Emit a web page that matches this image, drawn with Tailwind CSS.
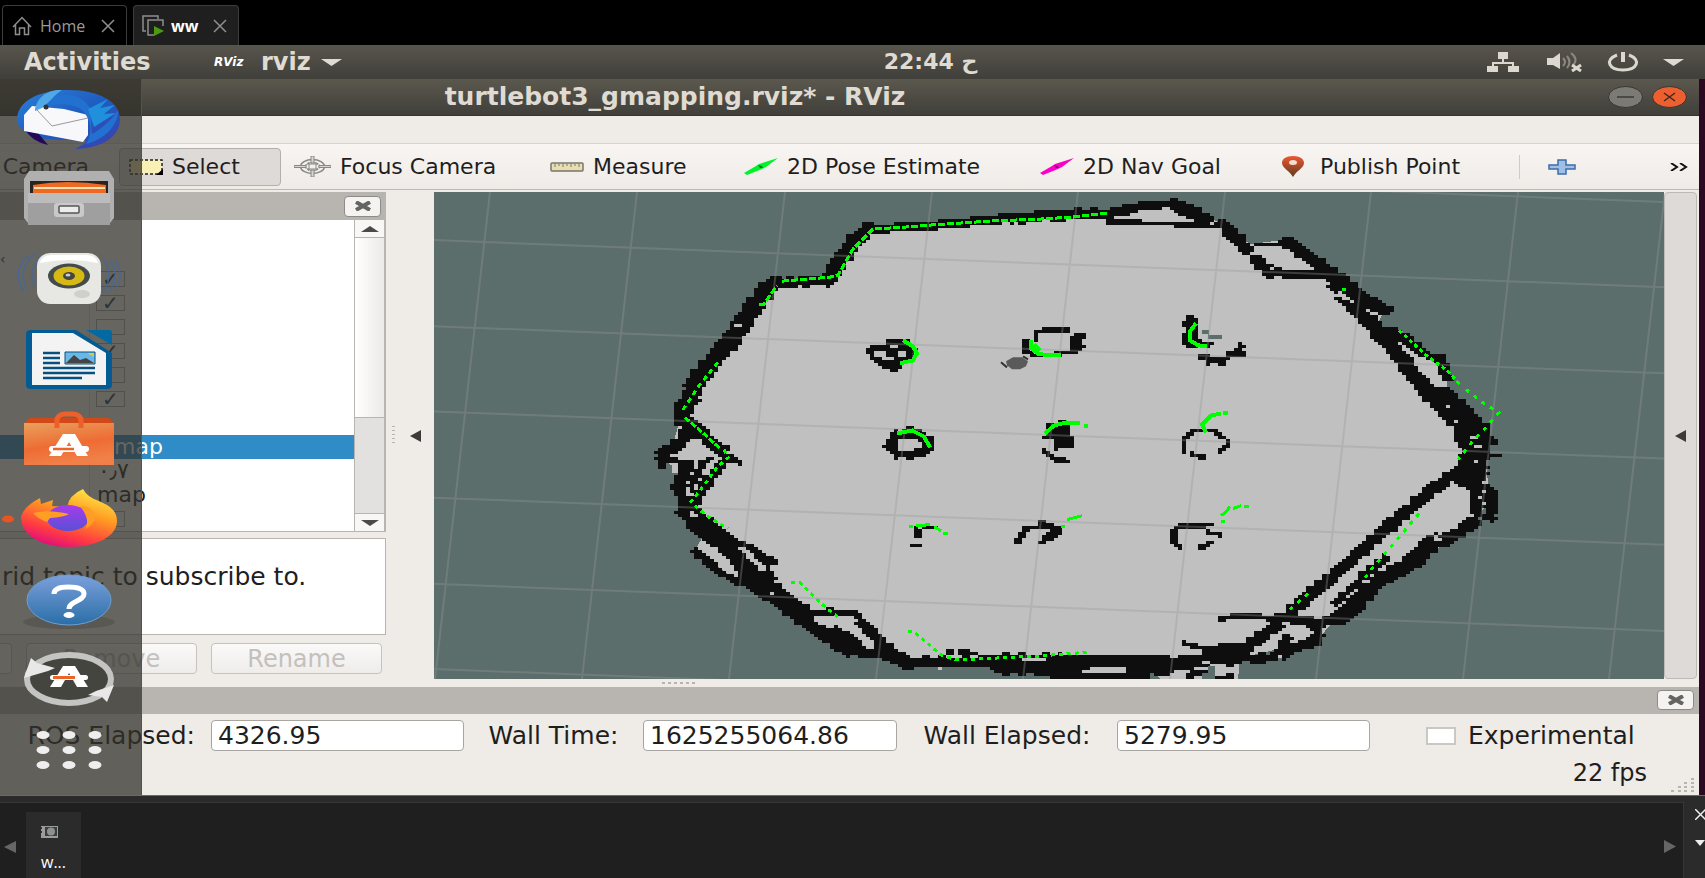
<!DOCTYPE html>
<html lang="en">
<head>
<meta charset="utf-8">
<title>ww</title>
<script src="https://cdn.jsdelivr.net/npm/@tailwindcss/browser@4"></script>
</head>
<body class="flex min-h-screen flex-col overflow-x-hidden bg-black font-['DejaVu_Sans',sans-serif] text-[#1e1e1e]">

<!-- Virtual machine tabs -->
<nav class="flex h-[45px] shrink-0 items-end gap-[6px] bg-black pl-[2px] font-['Open_Sans',sans-serif] text-base">
  <div class="flex h-10 w-[125px] items-center rounded-t border border-b-0 border-[#3c3c3c] pl-[9px] text-[#9a9a9a]">
    <svg class="h-5 w-5" viewBox="0 0 20 20" fill="none" stroke="#8f8f8f" stroke-width="1.5"><path d="M1 11 10 1.500 19 11M3.500 9v9.500h4V12h5v6.500h4V9"/></svg>
    <button class="ml-2 w-[61px] text-left">Home</button>
    <button aria-label="Close Home"><svg class="h-[14px] w-[14px]" viewBox="0 0 14 14" stroke="#8f8f8f" stroke-width="1.500"><path d="M1 1 13 13M13 1 1 13"/></svg></button>
  </div>
  <div class="flex h-10 w-[106px] items-center rounded-t border border-b-0 border-[#3c3c3c] bg-[#1f1f1f] pl-2 text-white">
    <svg class="h-[22px] w-[23px]" viewBox="0 0 23 22" fill="none"><path d="M4 16H1V1h15v3" stroke="#8f8f8f" stroke-width="1.500"/><path d="M12 20H6V5h15v6" stroke="#8f8f8f" stroke-width="1.500"/><path d="M12 11v10l10-5z" fill="#4a9a12"/></svg>
    <button class="ml-[6px] w-[42px] text-left font-bold">ww</button>
    <button aria-label="Close ww"><svg class="h-[14px] w-[14px]" viewBox="0 0 14 14" stroke="#8f8f8f" stroke-width="1.500"><path d="M1 1 13 13M13 1 1 13"/></svg></button>
  </div>
</nav>

<div class="relative flex grow flex-col bg-[#2a0a20]">
  <!-- Desktop panel -->
  <header class="grid h-[34px] shrink-0 grid-cols-3 items-center bg-linear-to-b from-[#58554c] to-[#403f3a] text-[#dfdbd2]">
    <div class="flex items-center pl-6 text-[24px] leading-8 font-bold">
      <button class="w-[190px] text-left">Activities</button>
      <span class="w-[47px] text-xs text-white italic">RViz</span>
      <button class="flex items-center gap-[10px]">rviz
        <svg class="h-[7px] w-[21px]" viewBox="0 0 21 7"><path d="M0 0h21L10.500 7z" fill="#dfdbd2"/></svg></button>
    </div>
    <button class="pl-[156px] text-center text-[22px] leading-8 font-bold">22:44 <span lang="ar">ح</span></button>
    <div class="flex items-center justify-end gap-6 pr-[21px]">
      <svg class="mr-1 h-5 w-8" viewBox="0 0 32 20" fill="#dcd8d0"><path d="M11 0h10v7h-4v3h10v4h5v6H21v-6h4v-2H7v2h4v6H0v-6h5v-4h10V7h-4z"/></svg>
      <svg class="h-5 w-9" viewBox="0 0 36 20"><path d="M0 6h6l7-5v16l-7-4H0z" fill="#dcd8d0"/><path d="M16 6q4 4 0 8M20 4q5 6 0 12M24 1q8 6 2 12" fill="none" stroke="#8c8982" stroke-width="2"/><path d="m25 13 9 6m0-6-9 6" stroke="#dcd8d0" stroke-width="3"/></svg>
      <svg class="h-5 w-8" viewBox="0 0 32 20" fill="none" stroke="#dcd8d0" stroke-width="3"><path d="M10 3C-3 8 2 18 16 18S35 8 22 3"/><path d="M16 0v10" stroke-width="4"/></svg>
      <svg class="h-[7px] w-[21px]" viewBox="0 0 21 7"><path d="M0 0h21L10.500 7z" fill="#dfdbd2"/></svg>
    </div>
  </header>

  <div class="mr-[6px] flex grow flex-col bg-[#efebe7]">
    <!-- Title bar -->
    <div class="flex h-[37px] shrink-0 items-center border-b border-[#34332f] bg-linear-to-b from-[#5b584e] to-[#403f3a]">
      <h1 class="w-[1350px] text-center text-[25px] leading-8 font-bold text-[#dfdbd2]">turtlebot3_gmapping.rviz* - RViz</h1>
      <div class="ml-auto flex gap-[9px] pr-3">
        <button aria-label="Minimize"><svg class="h-[22px] w-[35px]" viewBox="0 0 35 22"><ellipse cx="17.500" cy="11" rx="17" ry="10.500" fill="#7c7a74" stroke="#38372f"/><path d="M9 11h17" stroke="#3b3a35" stroke-width="1.500"/></svg></button>
        <button aria-label="Close"><svg class="h-[22px] w-[35px]" viewBox="0 0 35 22"><ellipse cx="17.500" cy="11" rx="17" ry="10.500" fill="#ee5f30" stroke="#38372f"/><path d="m12 7 11 8m0-8-11 8" stroke="#3b2a20" stroke-width="1.500"/></svg></button>
      </div>
    </div>
    <div class="h-7 shrink-0 border-b border-[#d6d2ce]"></div>

    <!-- Tool bar -->
    <div class="flex h-[46px] shrink-0 items-center border-b border-[#bdb9b5] bg-linear-to-b from-[#f8f5f2] to-[#efebe7] text-[22px] leading-7 whitespace-nowrap">
      <button class="w-[119px] pr-[30px] text-right">Camera</button>
      <button class="flex h-[38px] w-[162px] items-center gap-[9px] rounded border border-[#b3afab] bg-[#dedad7] pl-[9px]">
        <svg class="h-4 w-[34px]" viewBox="0 0 34 16"><path d="M1 1h32v14H1z" fill="#f9f0b5" stroke="#222" stroke-width="1.500" stroke-dasharray="3 2"/><path d="M34 10v6h-7z"/></svg>Select</button>
      <button class="flex w-[256px] items-center gap-[9px] pl-[13px]">
        <svg class="h-[21px] w-[37px]" viewBox="0 0 37 21" fill="none" stroke="#8a8884" stroke-width="1.500"><ellipse cx="18.500" cy="10.500" rx="12" ry="7"/><ellipse cx="18.500" cy="10.500" rx="7" ry="4" stroke-dasharray="2 1"/><path d="M0 9.500h12v2H0zM25 9.500h12v2H25zM17 0h3v7h-3zM17 14h3v7h-3z" stroke-width="1" fill="#d8d6d2"/><path d="M13 8h11M13 13h11M15 6v9M22 6v9" stroke-width="1"/></svg>Focus Camera</button>
      <button class="flex w-[194px] items-center gap-[9px] pl-[13px]">
        <svg class="h-[10px] w-[34px]" viewBox="0 0 34 10"><rect x="1" y="1" width="32" height="8" rx="1" fill="#e9deb0" stroke="#77756f" stroke-width="1.500"/><path d="M5 2v3M9 2v2M13 2v3M17 2v2M21 2v3M25 2v2M29 2v3" stroke="#77756f"/></svg>Measure</button>
      <button class="flex w-[296px] items-center gap-[9px] pl-[13px]">
        <svg class="h-[18px] w-[34px]" viewBox="0 0 34 18"><path d="M0 15 12 8l3-2L34 0 22 9l-4 2-15 6z" fill="#00f22c"/><path d="m14 7 4 1 1 2-3 0z" fill="#087a20"/></svg>2D Pose Estimate</button>
      <button class="flex w-[241px] items-center gap-[9px] pl-[13px]">
        <svg class="h-[18px] w-[34px]" viewBox="0 0 34 18"><path d="M0 15 12 8l3-2L34 0 22 9l-4 2-15 6z" fill="#fa00c8"/><path d="m14 7 4 1 1 2-3 0z" fill="#8a0870"/></svg>2D Nav Goal</button>
      <button class="flex w-[251px] items-center gap-4 pl-[14px]">
        <svg class="h-[21px] w-[22px]" viewBox="0 0 22 21"><defs><linearGradient id="pin" x2="0" y2="1"><stop stop-color="#ee5630"/><stop offset="1" stop-color="#5c3c22"/></linearGradient></defs><path d="M11 0c7 0 11 3 11 7 0 5-8 8-11 14C8 15 0 12 0 7 0 3 4 0 11 0z" fill="url(#pin)"/><ellipse cx="11" cy="6.500" rx="4" ry="2.500" fill="#f5ded4"/></svg>Publish Point</button>
      <span class="h-6 w-px bg-[#cfcbc7]"></span>
      <button class="ml-7" aria-label="Add tool"><svg class="h-4 w-[28px]" viewBox="0 0 28 16"><path d="M10 1h8v5h9v4h-9v5h-8v-5H1V6h9z" fill="#9fc0e4" stroke="#3d6cab" stroke-width="1.500"/></svg></button>
      <button class="ml-auto pr-[11px]" aria-label="More tools"><svg class="h-2 w-[18px]" viewBox="0 0 18 8" fill="none" stroke="#111" stroke-width="2"><path d="m1 0 6 4-6 4M10 0l6 4-6 4"/></svg></button>
    </div>

    <div class="flex grow pt-[2px]">
      <!-- Displays panel -->
      <section class="flex w-[386px] shrink-0 flex-col">
        <div class="flex h-7 shrink-0 items-center justify-end bg-[#b8b4b0] pr-[5px]">
          <button aria-label="Close displays" class="flex h-[21px] w-[37px] items-center justify-center rounded border border-[#8e8a86] bg-[#f5f3f1]"><svg class="h-[10px] w-4" viewBox="0 0 16 10" stroke="#666460" stroke-width="4"><path d="m1 1 14 8M15 1 1 9"/></svg></button>
        </div>
        <div class="flex h-[312px] shrink-0 border-r border-b border-[#b8b4b0] bg-white text-[22px] leading-6">
          <div class="grow pt-[23px]">
            <div class="h-6 text-sm leading-8 text-[#1c3a4c]">‹</div>
            <div class="ml-[89px] border-l border-[#e0dedc] pl-[6px]">
              <div class="flex h-6 items-center"><input type="checkbox" checked aria-label="Display 1" class="flex h-4 w-[29px] appearance-none items-center justify-center border border-[#b0aca8] checked:after:text-xl checked:after:text-[#103a5c] checked:after:content-['✓']"></div>
              <div class="flex h-6 items-center"><input type="checkbox" checked aria-label="Display 2" class="flex h-4 w-[29px] appearance-none items-center justify-center border border-[#b0aca8] checked:after:text-xl checked:after:text-[#103a5c] checked:after:content-['✓']"></div>
              <div class="flex h-6 items-center"><input type="checkbox" aria-label="Display 3" class="h-4 w-[29px] appearance-none border border-[#b0aca8]"></div>
              <div class="flex h-6 items-center"><input type="checkbox" checked aria-label="Display 4" class="flex h-4 w-[29px] appearance-none items-center justify-center border border-[#b0aca8] checked:after:text-xl checked:after:text-[#103a5c] checked:after:content-['✓']"></div>
              <div class="flex h-6 items-center"><input type="checkbox" aria-label="Display 5" class="h-4 w-[29px] appearance-none border border-[#b0aca8]"></div>
              <div class="flex h-6 items-center"><input type="checkbox" checked aria-label="Display 6" class="flex h-4 w-[29px] appearance-none items-center justify-center border border-[#b0aca8] checked:after:text-xl checked:after:text-[#103a5c] checked:after:content-['✓']"></div>
              <div class="h-6"></div>
            </div>
            <div class="h-6 bg-[#308cc6] pl-[114px] text-white">map</div>
            <div class="ml-[89px] h-6 border-l border-[#e0dedc] pl-2" lang="ar">٠٫٧</div>
            <div class="ml-[89px] h-6 border-l border-[#e0dedc] pl-[7px]">map</div>
            <div class="ml-[89px] flex h-6 items-center border-l border-[#e0dedc] pl-[6px]"><input type="checkbox" aria-label="Display 7" class="h-4 w-[29px] appearance-none border border-[#b0aca8]"></div>
          </div>
          <div class="flex w-[31px] flex-col border-x border-[#b8b4b0] bg-[#e3e1df]">
            <div class="flex h-[18px] items-center justify-center border-b border-[#b8b4b0] bg-[#f8f7f6]"><svg class="h-[6px] w-[18px]" viewBox="0 0 18 6"><path d="M0 6h18L9 0z" fill="#4c4a47"/></svg></div>
            <div class="h-[180px] border-b border-[#b8b4b0] bg-linear-to-r from-white to-[#eceae8]"></div>
            <div class="mt-auto flex h-[18px] items-center justify-center border-t border-[#b8b4b0] bg-[#f8f7f6]"><svg class="h-[6px] w-[18px]" viewBox="0 0 18 6"><path d="M0 0h18L9 6z" fill="#4c4a47"/></svg></div>
          </div>
        </div>
        <p class="mt-[6px] h-[97px] shrink-0 border border-l-0 border-[#b8b4b0] bg-white pt-6 pl-[2px] text-[25px] leading-7 whitespace-nowrap">rid topic to subscribe to.</p>
        <div class="mt-2 flex gap-[14px] text-[24px] leading-7 text-[#c3c0bd]">
          <span class="h-[31px] w-3 rounded-r border border-l-0 border-[#c6c2be] bg-[#f8f6f4]"></span>
          <button disabled class="h-[31px] w-[171px] rounded border border-[#c6c2be] bg-linear-to-b from-[#fbfaf9] to-[#efecea]">Remove</button>
          <button disabled class="h-[31px] w-[171px] rounded border border-[#c6c2be] bg-linear-to-b from-[#fbfaf9] to-[#efecea]">Rename</button>
        </div>
      </section>
      <button aria-label="Hide displays" class="flex w-12 shrink-0 items-center justify-between pr-[13px] pb-2 pl-[6px]">
        <svg class="h-5 w-[3px]" viewBox="0 0 3 20"><path d="M1.500 0v20" stroke="#b8b4b0" stroke-width="3" stroke-dasharray="1 3"/></svg>
        <svg class="h-3 w-[11px]" viewBox="0 0 11 12"><path d="M11 0v12L0 6z" fill="#3c3b38"/></svg>
      </button>
      <div class="flex grow flex-col">
        <!-- Occupancy map view -->
        <svg class="h-[486px] w-full grow bg-[#5b6e6b]" viewBox="434 193 1230 486" preserveAspectRatio="none" role="img" aria-label="Occupancy grid map">
          <g shape-rendering="crispEdges">
            <path fill="#c0c0c0" d="M680 420 700 377 767 290 777 284 830 280 865 230 1110 213 1176 205 1223 225 1250 245 1290 240 1340 277 1385 310 1376 327 1400 335 1448 375 1446 400 1482 430 1490 500 1471 527 1400 573 1335 620 1317 640 1240 658 1238 679 1160 679 1150 665 900 660 847 643 740 583 695 550 707 530 687 503 682 473 672 473 672 466 662 460 672 448z"/>
            <path id="walls" fill="#0e0e0e"/>
            <path id="gaps" fill="#c0c0c0"/>
            <path fill="#5b6e6b" d="M1202 331h7v5h13v4h-14v-5h-6zM1208 666h7v13h-13v-6h6z"/>
          </g>
          <path fill="none" stroke="#999" stroke-opacity=".35" stroke-width="2" d="M490 193 435 679M637 193 582 679M785 193 729 679M932 193 876 679M1078 193 1023 679M1225 193 1170 679M1371 193 1316 679M1518 193 1463 679M1665 193 1609 679M434 156 1664 203M434 241 1664 288M434 327 1664 374M434 412 1664 459M434 498 1664 545M434 584 1664 631M434 669 1664 716"/>
          <path fill="#5a5a5a" d="m1006 362 7-4h9l6 4-2 5-6 3h-8l-5-4z"/>
          <path fill="none" stroke="#333" stroke-width="2" d="m1001 363 6 5M1023 357l5 3"/>
          <g fill="none" stroke="#0f0" stroke-width="3" shape-rendering="crispEdges">
            <path stroke-dasharray="7 2" d="M759 305h5l13-19M782 282 830 278 838 276 853 250 873 230 905 228 930 226 990 222 1040 220 1073 218 1107 214"/>
            <path stroke-dasharray="5 4" d="M718 363 700 385 681 413"/>
            <path stroke-dasharray="6 2" d="m685 418 22 19 14 13"/>
            <path stroke-dasharray="4 4" d="m724 450 4 8-11 10-14 19-12 15 14 13 23 14"/>
            <path stroke-width="4" d="M903 341l10 6 4 7-4 7-13 3M897 434l15-3 12 6 6 11M1045 434l9-8 12-3 14 1M1084 427h4M1196 324l-6 8v9l8 5 9 1M1206 433l-4-8 9-9 10-2M1223 414h5M1031 341v8l8 6 22 1"/>
            <path stroke-width="7" d="M1033 346l6 6"/>
            <path d="M909 527h4M916 526l14-1M934 527l7 4M943 534h5M1061 527h4M1067 520l15-4M1221 522h4M1221 516l5-4 4-5M1233 509l8-3M1244 507h5"/>
            <path stroke-dasharray="4 4" d="M791 583h9l25 24 15 12M908 632h6l27 23 16 5 83-4 50-4"/>
            <path stroke-dasharray="4 3" d="M1342 290h5M1399 331l26 24 22 16 13 14"/>
            <path stroke-dasharray="4 6" d="m1466 390 19 15 14 8-12 14-13 13-16 20M1419 514l-29 34-15 17-10 13M1308 594l-20 17"/>
          </g>
        </svg>
        <div class="h-2 pt-[3px] pl-[228px]"><svg class="h-[2px] w-9" viewBox="0 0 36 2"><path d="M0 1h36" stroke="#b8b4b0" stroke-width="2" stroke-dasharray="3 3"/></svg></div>
      </div>
      <button aria-label="Show views" class="mr-[2px] mb-2 flex w-[33px] shrink-0 items-center justify-center rounded border border-[#bdb9b5] bg-[#dedad7]">
        <svg class="h-3 w-[11px]" viewBox="0 0 11 12"><path d="M11 0v12L0 6z" fill="#3c3b38"/></svg>
      </button>
    </div>

    <!-- Time panel -->
    <section class="h-[108px] shrink-0">
      <div class="flex h-[27px] items-start justify-end bg-[#b8b4b0] pt-[3px] pr-[5px]">
        <button aria-label="Close time" class="flex h-5 w-[37px] items-center justify-center rounded border border-[#8e8a86] bg-[#f5f3f1]"><svg class="h-[10px] w-4" viewBox="0 0 16 10" stroke="#666460" stroke-width="4"><path d="m1 1 14 8M15 1 1 9"/></svg></button>
      </div>
      <form class="mt-[6px] flex h-[31px] items-center text-[25px] leading-7 whitespace-nowrap">
        <label for="ros" class="w-[211px] pr-4 text-right">ROS Elapsed:</label>
        <input id="ros" value="4326.95" class="h-[31px] w-[253px] rounded border border-[#a9a5a1] bg-white px-[6px]">
        <label for="wall" class="w-[179px] text-center">Wall Time:</label>
        <input id="wall" value="1625255064.86" class="h-[31px] w-[254px] rounded border border-[#a9a5a1] bg-white px-[6px]">
        <label for="elapsed" class="w-[220px] text-center">Wall Elapsed:</label>
        <input id="elapsed" value="5279.95" class="h-[31px] w-[253px] rounded border border-[#a9a5a1] bg-white px-[6px]">
        <label class="ml-auto flex w-[273px] items-center gap-3"><input type="checkbox" class="h-[18px] w-[30px] appearance-none border-2 border-[#cbc7c3] bg-white">Experimental</label>
      </form>
      <div class="mt-[6px] flex justify-end text-[24px] leading-8">
        <span>22 fps</span>
        <svg class="mt-[21px] mr-1 ml-6 h-[14px] w-6" viewBox="0 0 24 14" fill="#b8b4b0"><path d="M20 0h3v2h-3zM20 4h3v2h-3zM20 8h3v2h-3zM20 12h3v2h-3zM13 4h3v2h-3zM13 8h3v2h-3zM13 12h3v2h-3zM7 8h3v2H7zM7 12h3v2H7zM0 12h3v2H0z"/></svg>
      </div>
    </section>
  </div>

  <!-- Dock over the window -->
  <aside class="absolute top-[34px] bottom-0 left-0 flex w-[142px] flex-col overflow-hidden border-r border-[#55534d] bg-[#33312b]/75">
    <button aria-label="Thunderbird"><svg class="block h-20 w-full" viewBox="0 0 141 80"><defs><linearGradient id="tb" x2="1" y2="1"><stop stop-color="#2a7fd8"/><stop offset=".5" stop-color="#1f5cc0"/><stop offset="1" stop-color="#3b3fae"/></linearGradient></defs><path d="M17 40C18 20 42 11 69 11c30 0 51 12 51 29 0 18-18 29-45 30 6-3 10-6 12-8l-42-2c-16-3-28-9-28-20z" fill="url(#tb)"/><path d="m26 52 12 2 10 12c-12-3-18-8-22-14z" fill="#23085c"/><path d="m24 52 0-16 8-9 32 3 24 6 0 20-5 7z" fill="#f8f8fb"/><path d="m36 30 16 17 36-8" fill="none" stroke="#9a9a9a"/><path d="M35 32c2-14 12-22 27-21L58 17c14-4 26 2 32 12l2 26c10-6 20-14 26-24 1 10-8 28-32 34 8-12 4-24-2-32-8-10-34-10-48-2z" fill="#2270d0"/><path d="M35 32c1-13 12-22 27-21-8 5-12 12-20 18z" fill="#50a8e6"/><path d="m88 30 20-10-8 9 15-3-11 9 12-1-22 14z" fill="#2090dc"/><circle cx="46" cy="28" r="2.500" fill="#333"/></svg></button>
    <button aria-label="Files"><svg class="block h-20 w-full" viewBox="0 0 141 80"><path d="m24 20 5-8h80l5 8v39l-4 5H28l-4-5z" fill="#b0b0b0"/><path d="M30 22h78v14H30z" fill="#2a2420"/><path d="M33 36V26q34-6 73 0v10z" fill="#ed6a24"/><path d="M34 29h71" stroke="#ffe0b0" stroke-width="2"/><path d="M28 34h82v32H28z" fill="#9f9f9f"/><path d="M28 34h82v10H28z" fill="#bcbcbc"/><rect x="54" y="44" width="30" height="14" rx="3" fill="#c9c9c9"/><rect x="59" y="47" width="20" height="7" rx="1" fill="#ececec" stroke="#555" stroke-width="1.500"/></svg></button>
    <button aria-label="Rhythmbox"><svg class="block h-20 w-full" viewBox="0 0 141 80"><g fill="none" stroke="#3f68a8" stroke-width="1.500" opacity=".7"><path d="M29 16q-18 14-6 36M35 15q-20 16-7 36M42 17q-16 14-7 30M109 20q12 14 0 33M103 20q12 14 0 34M115 21q10 14 0 30"/></g><rect x="37" y="14" width="64" height="51" rx="13" fill="#e7e7e4"/><path d="M40 24q2-8 12-8h34q10 0 12 8-28-6-58 0z" fill="#fff"/><ellipse cx="69" cy="37" rx="21" ry="12.500" fill="#454a4a"/><ellipse cx="69" cy="37" rx="15.500" ry="9.500" fill="#d6b915"/><ellipse cx="69" cy="37" rx="6" ry="4" fill="#444"/><ellipse cx="68" cy="36" rx="2.500" ry="1.500" fill="#ccc"/><ellipse cx="82" cy="55" rx="8" ry="4" fill="#cfcfcb"/></svg></button>
    <button aria-label="LibreOffice Writer"><svg class="block h-20 w-full" viewBox="0 0 141 80"><path d="M31 11h45l36 23v32q0 4-5 4H31q-5 0-5-4V15q0-4 5-4z" fill="#035b94"/><path d="M86 11h23q3 0 3 3v12z" fill="#0369a3"/><path d="M32 14h41l33 20v32H32z" fill="#f3f3f3"/><path d="M43 34h17M43 39h17M43 44h17M43 49h52M43 54h52M43 59h39" stroke="#07507f" stroke-width="2.500"/><path d="M65 33h30v12H65z" fill="#6ab8e8" stroke="#07507f"/><path d="m66 44 8-8 6 5 6-2 8 5z" fill="#444"/><path d="M87 34h7v4z" fill="#dcc94c"/></svg></button>
    <button aria-label="Ubuntu Software"><svg class="block h-20 w-full" viewBox="0 0 141 80"><defs><linearGradient id="sw" x2=".3" y2="1"><stop stop-color="#e9a05c"/><stop offset=".6" stop-color="#ee6c34"/><stop offset="1" stop-color="#f08048"/></linearGradient></defs><path d="m24 25 5-6h80l5 6z" fill="#cf4a18"/><path d="M24 24h90v42H24z" fill="url(#sw)"/><path d="M57 29V20q2-5 8-5h8q6 0 8 5v9" fill="none" stroke="#ed602b" stroke-width="5"/><path d="M63 35h12l13 22H77l-8-14-8 14H49z" fill="#fff"/><rect x="49" y="47" width="40" height="6" rx="3" fill="#fff"/><path d="M53 50h21" stroke="#ed6428" stroke-width="2.500"/></svg></button>
    <button aria-label="Firefox"><svg class="block h-20 w-full" viewBox="0 0 141 80"><defs><linearGradient id="ff" x1=".8" y1="0" x2=".3" y2="1"><stop stop-color="#fff04a"/><stop offset=".4" stop-color="#ff9a22"/><stop offset=".75" stop-color="#ff3d40"/><stop offset="1" stop-color="#e10a80"/></linearGradient><linearGradient id="fg" x2="0" y2="1"><stop stop-color="#a83bea"/><stop offset="1" stop-color="#5850d8"/></linearGradient></defs><ellipse cx="8" cy="40" rx="6" ry="3.500" fill="#e95420"/><path d="M21 38q2-10 19-19l1 6 12-4-1 6 15 1q2-12 16-18 4 8 16 12l8 4q10 6 10 16c0 15-20 26-48 26S21 56 21 38z" fill="url(#ff)"/><ellipse cx="68" cy="39" rx="21" ry="13" fill="url(#fg)"/><path d="M33 34q14-4 36 1-5 3-19 4l-3 4q-9-3-14-9zM80 27q12 0 14 8 3 9-9 15 6-9-5-23z" fill="#ff9d24"/></svg></button>
    <button aria-label="Help"><svg class="block h-20 w-full" viewBox="0 0 141 80"><defs><linearGradient id="hp" x2="0" y2="1"><stop stop-color="#7ba0dc"/><stop offset="1" stop-color="#2a6ea6"/></linearGradient></defs><ellipse cx="69" cy="63" rx="46" ry="7" fill="#5a5853"/><ellipse cx="69" cy="41" rx="42" ry="25" fill="url(#hp)" stroke="#6ea0d0"/><path d="M54 35q0-7 14-7 16 0 16 7c0 7-15 7-15 15" fill="none" stroke="#fff" stroke-width="5"/><ellipse cx="69" cy="56" rx="5.500" ry="3" fill="#fff"/></svg></button>
    <button aria-label="Software Updater"><svg class="block h-20 w-full" viewBox="0 0 141 80"><ellipse cx="69" cy="40" rx="42" ry="24" fill="#454540" stroke="#c4c4c2" stroke-width="6"/><path d="m24 39 7-20 6 5 18 5-7 3zM114 46l-7 17-5-5-14-2 8-4z" fill="#e8e8e8"/><path d="M63 27h12l13 21H77l-8-14-8 14H50z" fill="#fff"/><rect x="50" y="36" width="38" height="5" rx="2.500" fill="#fff"/><path d="M53 38.500h22" stroke="#ed6428" stroke-width="3"/></svg></button>
    <button aria-label="Show applications"><svg class="block h-[76px] w-full" viewBox="0 0 141 76" fill="#eee"><g id="dots"><ellipse cx="43" cy="16" rx="6.500" ry="4"/><ellipse cx="69" cy="16" rx="6.500" ry="4"/><ellipse cx="95" cy="16" rx="6.500" ry="4"/></g><use href="#dots" y="15"/><use href="#dots" y="30"/></svg></button>
  </aside>
</div>

<!-- Thumbnail bar -->
<footer class="flex h-[83px] shrink-0 border-t border-[#6b696b] bg-[#2b2b2b] pt-[6px] font-['Open_Sans',sans-serif]">
  <div class="flex grow items-stretch border-t border-r border-[#373737] bg-[#1f1f1f]">
    <button aria-label="Scroll left" class="w-[26px] pt-3 pl-1"><svg class="h-3 w-3" viewBox="0 0 12 12"><path d="M12 0v12L0 6z" fill="#666"/></svg></button>
    <button class="mt-[9px] flex w-[55px] flex-col items-start bg-[#2b2b2b] pt-[14px] pl-[15px] text-base leading-5 text-white">
      <svg class="mb-[14px] h-3 w-[17px]" viewBox="0 0 17 12"><path d="M0 0h17v12H0z" fill="#9c9c9a"/><path d="M4 1h12v9H4z" fill="#33403f"/><ellipse cx="10" cy="5.500" rx="4" ry="4" fill="#8f9190"/><path d="M0 1h1v2H0zM0 5h1v2H0z" fill="#333"/></svg>w...</button>
    <button aria-label="Scroll right" class="ml-auto pt-3 pr-[7px]"><svg class="h-[13px] w-3" viewBox="0 0 12 13"><path d="M0 0v13l12-6.500z" fill="#666"/></svg></button>
  </div>
  <div class="flex w-[21px] flex-col items-end gap-[20px] overflow-hidden pt-[7px]">
    <button aria-label="Close thumbnails"><svg class="block h-[11px] w-[10px]" viewBox="0 0 10 11" fill="none" stroke="#eee" stroke-width="1.500"><path d="m0 0 11 11M11 0 0 11"/></svg></button>
    <button aria-label="Thumbnail options"><svg class="block h-[6px] w-[10px]" viewBox="0 0 10 6"><path d="M0 0h10L5 6z" fill="#eee"/></svg></button>
  </div>
</footer>

<script>
// Each entry: half thickness, then x,y pairs of a line through occupied cells.
const walls = [
 [7,[683,413,700,377,730,343,750,313,767,290,777,284]],[5,[777,284,827,281]],[6,[827,281,837,267,853,243,870,230]],
 [4,[870,230,930,227,1000,220]],[5,[1000,220,1033,218,1073,215,1107,215]],[4,[1107,215,1140,208,1176,204]],[6,[1176,206,1205,220]],
 [2,[1107,223,1150,224,1215,227]],[5,[1223,225,1232,235,1248,250]],[5,[1256,260,1264,268]],[4,[1268,274,1327,276,1338,285]],
 [6,[1336,285,1353,307,1374,327,1399,357,1425,390,1450,417,1472,437]],[2,[1256,245,1277,245]],
 [5,[1287,243,1299,252,1320,265,1338,279,1356,293]],[5,[1360,298,1385,312]],[4,[1389,332,1399,336,1421,353,1439,360,1448,378]],
 [6,[1446,395,1461,410,1482,430,1482,453]],[11,[1470,430,1475,450,1470,478]],[5,[1475,475,1477,495,1477,513]],[4,[1489,490,1493,500,1489,518]],
 [2,[1490,442,1494,442]],[2,[1485,456,1500,456]],
 [5,[1464,468,1435,487,1399,518,1356,556,1320,587,1291,612]],
 [5,[1474,522,1460,533,1446,540]],[7,[1434,540,1415,560,1396,571,1374,583,1355,605,1338,619]],[3,[1385,558,1362,577,1347,592,1335,604]],
 [2,[1222,619,1232,616,1270,617]],[4,[1270,618,1335,622]],[5,[1317,622,1315,640,1295,648,1282,655]],[5,[1278,625,1258,638,1246,648,1215,650]],[2,[1184,643,1200,648,1225,651]],[4,[1286,640,1278,656,1248,659]],
 [6,[1165,665,1200,660,1236,658]],[3,[1190,675,1205,673]],[2,[1218,678,1230,676]],
 [10,[1060,665,1110,665,1160,665]],[5,[907,662,973,662,1060,662]],[3,[990,657,1060,657]],[6,[1000,668,1050,669]],[7,[1055,672,1140,673]],
 [9,[690,513,707,530,737,550,750,575,770,592,800,612,813,623,847,643]],[7,[847,648,880,652,907,662]],[7,[755,560,765,580]],
 [3,[695,550,720,572,740,583]],[3,[743,543,760,555,773,564]],[3,[810,612,853,613]],[5,[853,615,873,637,895,655]],[2,[947,652,951,652]],[2,[962,652,974,653]],
 [6,[683,413,682,422]],[5,[682,420,707,437,722,450]],[3,[720,452,737,461]],[4,[726,460,715,472,703,487,697,500]],[3,[708,460,694,477,690,495]],
 [5,[690,432,675,446,663,453]],[3,[662,455,661,465]],[3,[665,462,678,459]],[5,[687,465,680,486,684,500,688,510]],
 [8,[878,354,900,356,904,353]],[5,[885,365,895,366]],[3,[890,343,905,343]],
 [2,[1036,340,1036,332,1068,331]],[5,[1077,339,1077,348]],[2,[1026,342,1026,352,1036,357,1058,357]],[2,[1058,354,1074,353]],
 [5,[1191,322,1190,340]],[3,[1192,345,1208,344]],[2,[1200,358,1228,360]],[4,[1210,361,1222,362]],[2,[1230,355,1240,355]],[3,[1240,348,1240,354]],
 [4,[890,445,896,436,912,433,926,440,928,448,914,455,898,454,890,445]],
 [5,[1064,432,1060,445]],[6,[1055,430,1066,442]],[2,[1045,437,1049,437]],[2,[1044,451,1052,456,1058,460,1068,461]],[3,[1050,428,1066,426]],
 [2,[1184,452,1184,438,1192,432,1216,432,1222,438]],[2,[1228,440,1228,445,1220,452]],[2,[1192,454,1204,458]],
 [3,[917,530,917,537]],[2,[915,545,919,545]],[1,[924,527,937,528]],
 [3,[1019,540,1024,531]],[2,[1026,528,1045,526]],[4,[1043,523,1056,530]],[3,[1056,533,1043,541]],
 [2,[1174,541,1173,531,1182,526,1212,525]],[2,[1208,532,1220,535]],[2,[1202,547,1210,542]],[2,[1176,545,1181,547]]
];
const gaps = [
 [2,[692,440,703,447]],[2,[690,447,680,459]],[2,[713,462,706,472]],[2,[688,490,689,495]],[2,[692,514,693,515]],
 [2,[705,551,735,573]],[2,[742,548,762,568]],[1,[772,594,774,594]],[3,[820,619,832,625]],[3,[849,619,852,621]],[3,[857,630,870,644]],[1,[846,643,849,643]],
 [1,[938,669,941,669]],[2,[1084,671,1124,670]],[1,[1025,660,1046,660]],[1,[1330,295,1347,300]],[2,[1340,294,1344,297]],[1,[1350,302,1352,303]],
 [1,[737,327,741,327]],[2,[878,355,882,355]],[2,[886,360,889,360]],[2,[899,355,903,355]],[1,[1446,407,1448,407]],[1,[1457,423,1460,424]],[1,[1472,437,1476,438]],
 [1,[1476,446,1480,446]],[1,[1475,462,1477,463]],[1,[1450,483,1453,483]],[1,[1478,497,1481,497]],[1,[1484,511,1486,511]],[2,[1437,538,1438,540]],
 [1,[1366,582,1368,583]],[1,[1357,589,1350,594]],[1,[1343,603,1344,604]],[1,[1280,622,1284,622]],[1,[1306,632,1312,632]],[1,[1180,661,1184,661]],[1,[1203,662,1208,662]],[1,[1278,656,1280,656]]
];
const W = 4, H = 3;
function trace(lines) {
  let d = "";
  for (let y = 193; y < 679; y += H) {
    let start = -1;
    for (let x = 434; x <= 1664; x += W) {
      const cx = (x + W / 2) / 1.4, cy = y + H / 2;
      const rough = (((x >> 3) * 7 + (y >> 2) * 13) % 5 - 2) * 0.5;
      let hit = false;
      for (const [r, p] of lines) {
        for (let i = 0; i + 3 < p.length && !hit; i += 2) {
          const ax = p[i] / 1.4, ay = p[i + 1], bx = p[i + 2] / 1.4, by = p[i + 3];
          const vx = bx - ax, vy = by - ay;
          const t = Math.max(0, Math.min(1, ((cx - ax) * vx + (cy - ay) * vy) / (vx * vx + vy * vy)));
          if (Math.hypot(cx - ax - t * vx, cy - ay - t * vy) < r + 0.3 + (r > 2 ? rough : 0)) hit = true;
        }
        if (hit) break;
      }
      if (hit && start < 0) start = x;
      if (!hit && start >= 0) { d += `M${start} ${y}H${x}v${H}H${start}z`; start = -1; }
    }
  }
  return d;
}
document.getElementById("walls").setAttribute("d", trace(walls));
document.getElementById("gaps").setAttribute("d", trace(gaps));
</script>
</body>
</html>
